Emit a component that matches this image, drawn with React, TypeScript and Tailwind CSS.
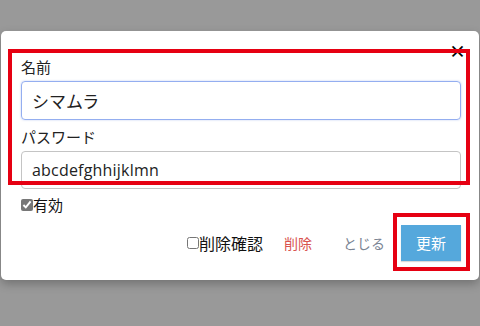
import React, { useState } from "react";

const jp = '"Noto Sans CJK JP", "Noto Sans", sans-serif';

function MarkBox({ x, y, w, h }: { x: number; y: number; w: number; h: number }) {
    // red annotation frame drawn over the dialog
    return (
        <div
            className="pointer-events-none absolute border-[4px] border-[#e60012]"
            style={{ left: x, top: y, width: w, height: h }}
        />
    );
}

export default function App() {
    const [name, setName] = useState("シマムラ");
    const [pass, setPass] = useState("abcdefghhijklmn");
    const [active, setActive] = useState(true);
    const [confirmDel, setConfirmDel] = useState(false);

    return (
        <div
            className="relative h-[326px] w-[480px] overflow-hidden bg-[#999999] pt-[31px] pl-[1px]"
            style={{ fontFamily: jp }}
        >
            <div className="relative h-[249px] w-[478px] rounded-[5px] bg-white pl-[20px] pt-[25px] shadow-[0_4px_10px_rgba(0,0,0,0.25)]">
                <button className="absolute top-[11px] right-[13px] text-[17px] leading-none font-bold text-black">
                    ×
                </button>

                <label className="block text-[15px] leading-[22px] text-[#222]">名前</label>
                <input
                    value={name}
                    onChange={(e) => setName(e.target.value)}
                    className="mt-[3px] block h-[39px] w-[440px] rounded-[4px] border border-[#94aef0] px-[10px] text-[17px] text-[#222] shadow-[0_0_2px_rgba(120,150,230,0.5)] outline-none"
                />

                <label className="mt-[6px] block text-[15px] leading-[22px] text-[#222]">パスワード</label>
                <input
                    value={pass}
                    onChange={(e) => setPass(e.target.value)}
                    className="mt-[3px] block h-[38px] w-[440px] rounded-[4px] border border-[#c4c4c4] px-[10px] text-[16px] tracking-[0.2px] text-[#222] outline-none"
                    style={{ fontFamily: '"Open Sans", "Noto Sans CJK JP", sans-serif' }}
                />

                <label className="mt-[7px] flex h-[18px] items-center text-[15px] text-[#111]">
                    <input
                        type="checkbox"
                        checked={active}
                        onChange={(e) => setActive(e.target.checked)}
                        className="m-0 h-[12px] w-[12px] accent-[#777]"
                    />
                    <span>有効</span>
                </label>

                <div className="mt-[11px] flex w-[440px] items-center justify-end">
                    <label className="flex items-center text-[16px] text-[#111]">
                        <input
                            type="checkbox"
                            checked={confirmDel}
                            onChange={(e) => setConfirmDel(e.target.checked)}
                            className="m-0 h-[12px] w-[12px]"
                        />
                        <span>削除確認</span>
                    </label>
                    <button className="ml-[21px] text-[14px] text-[#d9534f]">削除</button>
                    <button className="ml-[31px] text-[14px] text-[#7b8594]">とじる</button>
                    <button className="ml-[16px] h-[36px] w-[60px] bg-[#55a8dc] text-[15px] text-white shadow-[0_1px_1px_rgba(0,0,0,0.15)]">
                        更新
                    </button>
                </div>
            </div>

            <MarkBox x={8} y={49} w={462} h={136} />
            <MarkBox x={393} y={213} w={77} h={58} />
        </div>
    );
}
